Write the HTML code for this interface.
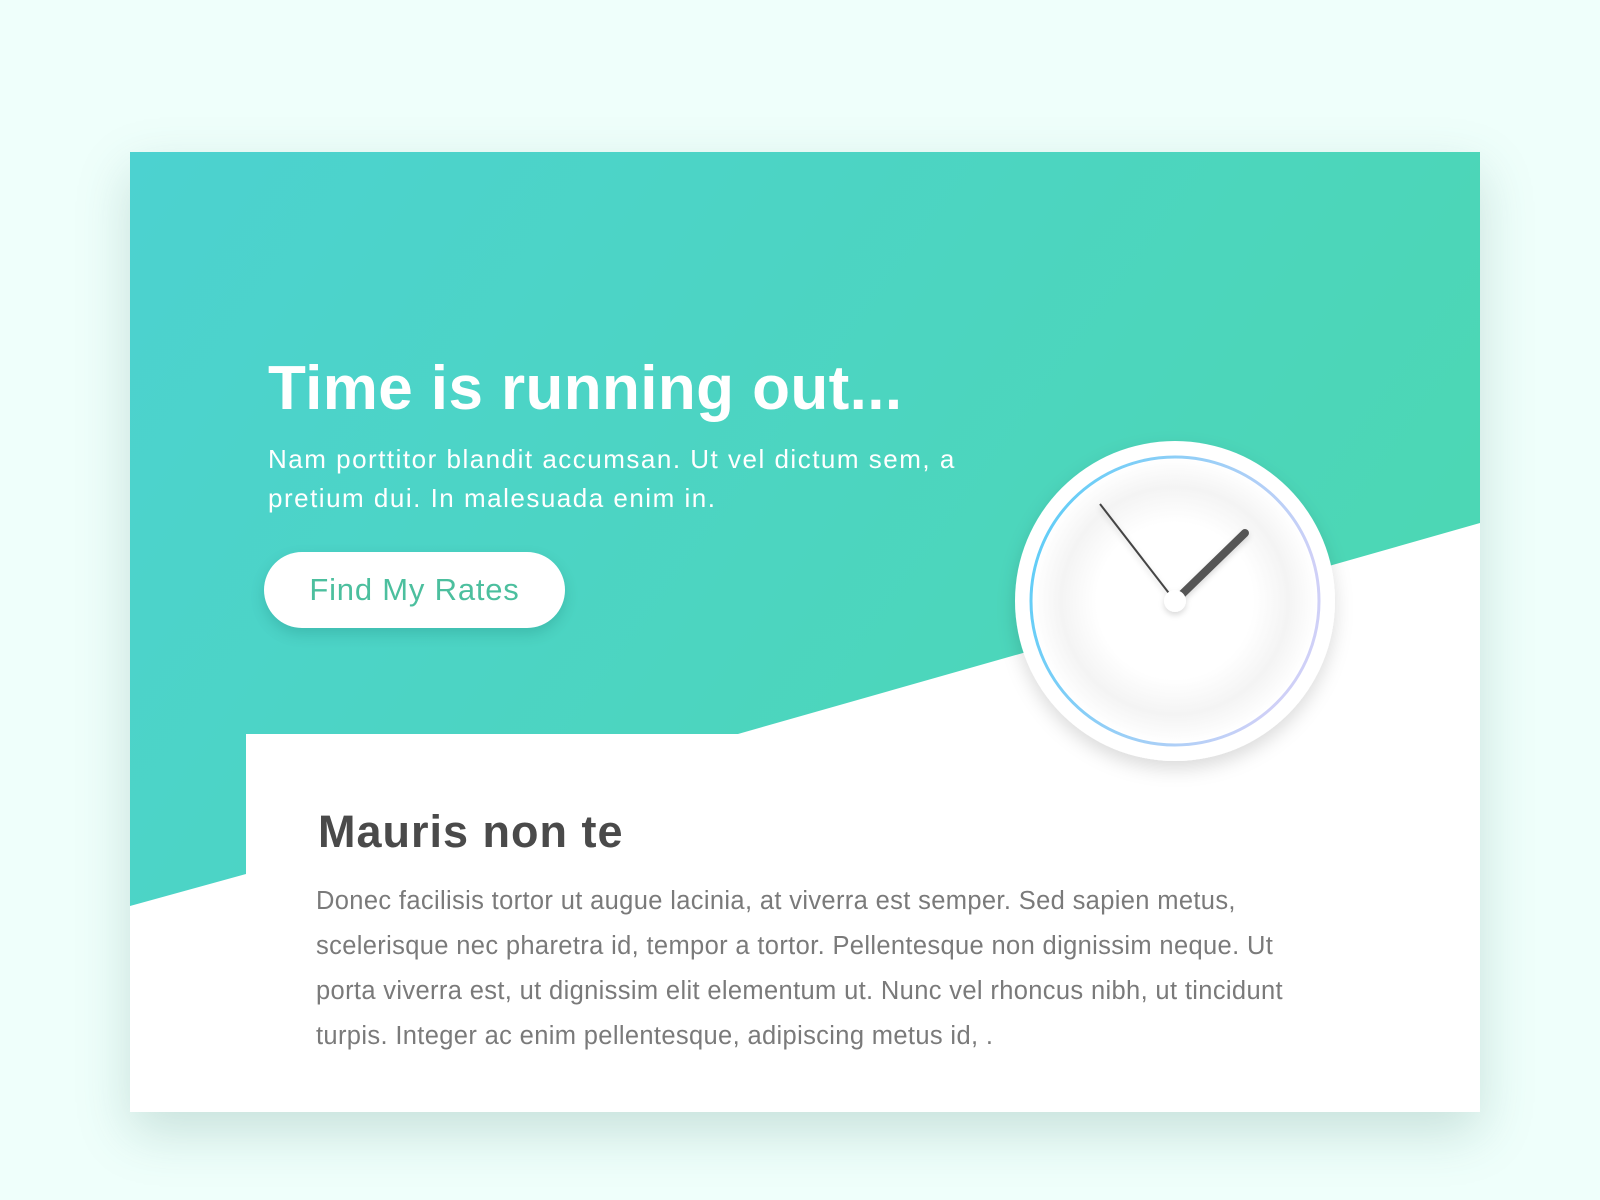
<!DOCTYPE html>
<html><head><style>
html,body{margin:0;padding:0;width:1600px;height:1200px;overflow:hidden;background:#effffb;font-family:"Liberation Sans",sans-serif;}
.card{position:absolute;left:130px;top:152px;width:1350px;height:960px;background:#fff;box-shadow:0 20px 50px rgba(60,120,110,0.22);overflow:hidden;}
svg.bg{position:absolute;left:0;top:0;}
.t{position:absolute;left:138px;top:201px;color:#fff;font-size:62px;font-weight:bold;letter-spacing:0.4px;margin:0;}
.s{position:absolute;left:138px;top:288px;color:#fff;font-size:26px;line-height:39px;width:700px;letter-spacing:1.5px;}
.btn{position:absolute;left:134px;top:400px;width:301px;height:76px;border-radius:38px;background:#fff;color:#4cbf9e;font-size:31px;line-height:76px;text-align:center;letter-spacing:0.8px;box-shadow:0 6px 14px rgba(0,80,70,0.18);}
.h{position:absolute;left:188px;top:654px;color:#4a4a4a;font-size:45px;font-weight:bold;letter-spacing:1px;margin:0;}
.p{position:absolute;left:186px;top:727px;width:990px;color:#7a7a7a;font-size:25.5px;line-height:45px;letter-spacing:0.35px;}
</style></head><body>
<div class="card">
<svg class="bg" width="1350" height="960">
<defs>
<linearGradient id="g" x1="0" y1="0" x2="1" y2="0.4"><stop offset="0" stop-color="#4cd2d0"/><stop offset="1" stop-color="#4cd7b5"/></linearGradient>
<linearGradient id="r" x1="0" y1="0" x2="1" y2="0.3"><stop offset="0" stop-color="#55cdf7"/><stop offset="1" stop-color="#cfd0f7"/></linearGradient>
<radialGradient id="f" cx="0.5" cy="0.5" r="0.5"><stop offset="0.55" stop-color="#fff"/><stop offset="0.8" stop-color="#f4f4f4"/><stop offset="1" stop-color="#fff"/></radialGradient>
<filter id="sh" x="-30%" y="-30%" width="160%" height="160%"><feDropShadow dx="0" dy="8" stdDeviation="9" flood-color="#000" flood-opacity="0.14"/></filter>
<filter id="hs"><feDropShadow dx="0" dy="3" stdDeviation="3" flood-color="#000" flood-opacity="0.15"/></filter>
</defs>
<polygon points="0,0 1350,0 1350,371 608,582 116,582 116,722 0,754" fill="url(#g)"/>
<circle cx="1045" cy="449" r="160" fill="#fff" filter="url(#sh)"/>
<circle cx="1045" cy="449" r="142" fill="url(#f)"/>
<circle cx="1045" cy="449" r="144" fill="none" stroke="url(#r)" stroke-width="3"/>
<g filter="url(#hs)">
<line x1="1045" y1="449" x2="970" y2="352" stroke="#444" stroke-width="2"/>
<line x1="1045" y1="449" x2="1115" y2="381" stroke="#555" stroke-width="8" stroke-linecap="round"/>
<circle cx="1045" cy="449" r="11" fill="#fff"/>
</g>
</svg>
<h1 class="t">Time is running out...</h1>
<div class="s">Nam porttitor blandit accumsan. Ut vel dictum sem, a pretium dui. In malesuada enim in.</div>
<div class="btn">Find My Rates</div>
<h2 class="h">Mauris non te</h2>
<div class="p">Donec facilisis tortor ut augue lacinia, at viverra est semper. Sed sapien metus, scelerisque nec pharetra id, tempor a tortor. Pellentesque non dignissim neque. Ut porta viverra est, ut dignissim elit elementum ut. Nunc vel rhoncus nibh, ut tincidunt turpis. Integer ac enim pellentesque, adipiscing metus id, .</div>
</div>
</body></html>
